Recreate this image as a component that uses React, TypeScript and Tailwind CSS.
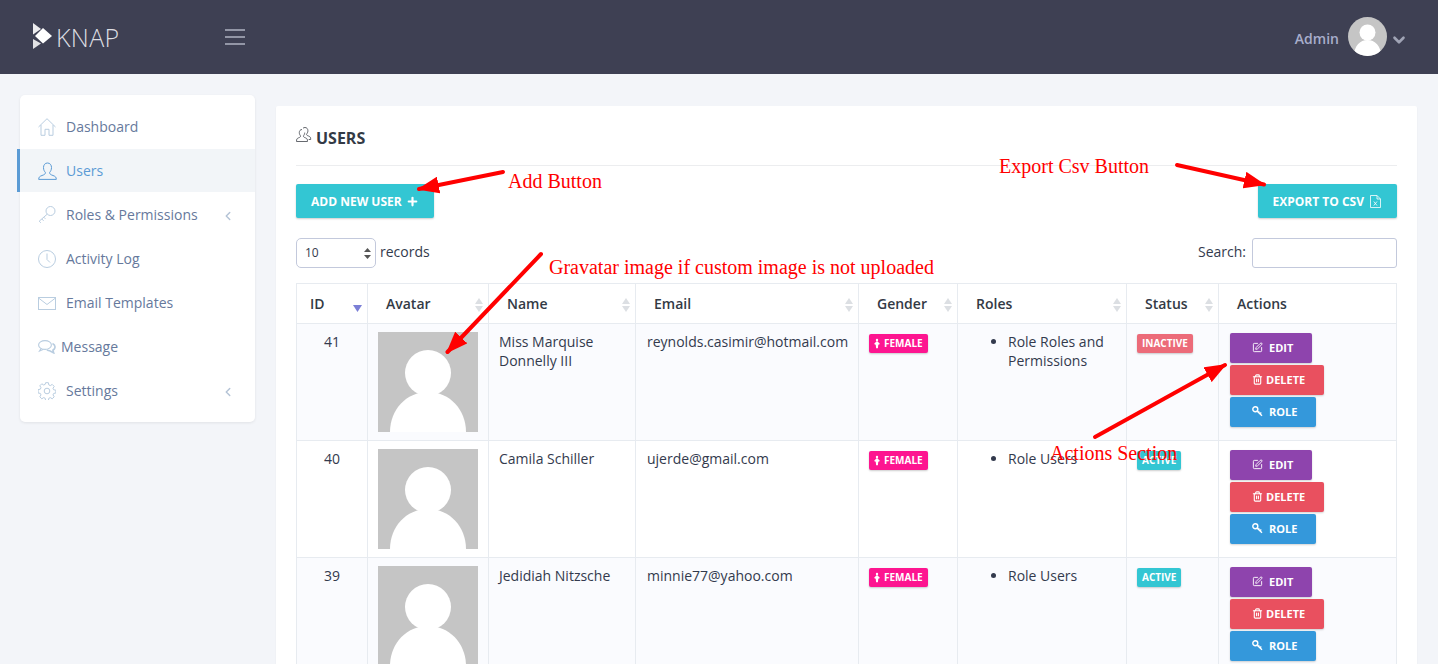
import React from "react";
import { Plus, Trash2, SquarePen, ChevronLeft, ChevronDown } from "lucide-react";

const users = [
  {
    id: 41,
    name: "Miss Marquise Donnelly III",
    email: "reynolds.casimir@hotmail.com",
    role: "Role Roles and Permissions",
    status: "INACTIVE",
  },
  { id: 40, name: "Camila Schiller", email: "ujerde@gmail.com", role: "Role Users", status: "ACTIVE" },
  { id: 39, name: "Jedidiah Nitzsche", email: "minnie77@yahoo.com", role: "Role Users", status: "ACTIVE" },
];

function Logo() {
  return (
    <div className="flex items-center">
      <svg width="22" height="30" viewBox="0 0 22 30">
        <polygon points="1,1 9,7 1,12.5" fill="#fff" opacity="0.9" />
        <polygon points="3,14 11,6 20,14 11,21.5" fill="#fff" />
        <polygon points="1,17 9,21.5 1,27" fill="#fff" opacity="0.85" />
      </svg>
      <span className="ml-[2px] text-[25px] leading-none font-light tracking-[0.3px] text-[#dcdde1]">KNAP</span>
    </div>
  );
}

function HomeIcon() {
  return (
    <svg width="18" height="18" viewBox="0 0 18 18" fill="none" stroke="#b9cde0" strokeWidth="1">
      <path d="M0.5 9 9 0.7 17.5 9M3 7v10.3h4v-6h4v6h4V7" />
    </svg>
  );
}

function UserIcon({ color }: { color: string }) {
  return (
    <svg width="19" height="18" viewBox="0 0 19 18" fill="none" stroke={color} strokeWidth="1">
      <path d="M9.5 1C7 1 5.5 3 5.5 5.5 5.5 8 6.6 9.6 7.4 10.5 7.4 12 6.6 12.6 4 13.5 1.8 14.3 .7 15 .7 17.4H18.3C18.3 15 17.2 14.3 15 13.5 12.4 12.6 11.6 12 11.6 10.5 12.4 9.6 13.5 8 13.5 5.5 13.5 3 12 1 9.5 1Z" />
    </svg>
  );
}

function KeyIcon() {
  return (
    <svg width="18" height="18" viewBox="0 0 18 18" fill="none" stroke="#b9cde0" strokeWidth="1">
      <circle cx="12.5" cy="5" r="4.5" />
      <path d="M9.2 8.2 1.2 15.2l1.6 1.6M3.8 13l1.8 1.8M5.8 11.2l1.6 1.6" />
    </svg>
  );
}

function ClockIcon() {
  return (
    <svg width="18" height="18" viewBox="0 0 18 18" fill="none" stroke="#b9cde0" strokeWidth="1">
      <circle cx="9" cy="9" r="8.5" />
      <path d="M9 3.5V9.5L12 12.5" />
    </svg>
  );
}

function MailIcon() {
  return (
    <svg width="18" height="13" viewBox="0 0 18 13" fill="none" stroke="#b9cde0" strokeWidth="1">
      <rect x="0.5" y="0.5" width="17" height="12" />
      <path d="M0.5 1 9 7.5 17.5 1" />
    </svg>
  );
}

function ChatIcon() {
  return (
    <svg width="18" height="14" viewBox="0 0 18 14" fill="none" stroke="#b9cde0" strokeWidth="1.1">
      <ellipse cx="7" cy="5" rx="6.4" ry="4.4" />
      <path d="M3 8.5 1.5 11 5.5 9.2" />
      <path d="M14.5 3.5c2 1 2.8 2.6 2.4 4.2-.3 1.2-1.2 2-2 2.5l.8 2.7-4-2.2c-1 0-2-.3-2.8-.8" strokeWidth="1.6" />
    </svg>
  );
}

function GearIcon() {
  return (
    <svg width="18" height="18" viewBox="0 0 18 18" fill="none" stroke="#b9cde0" strokeWidth="1">
      <circle cx="9" cy="9" r="2.8" />
      <path d="M7.6 .7h2.8l.4 2.2 1.5.7 1.9-1.2 2 2-1.2 1.9.7 1.5 2.2.4v2.8l-2.2.4-.7 1.5 1.2 1.9-2 2-1.9-1.2-1.5.7-.4 2.2H7.6l-.4-2.2-1.5-.7-1.9 1.2-2-2 1.2-1.9-.7-1.5-2.2-.4V7.6l2.2-.4.7-1.5-1.2-1.9 2-2 1.9 1.2 1.5-.7Z" />
    </svg>
  );
}

function GroupIcon() {
  return (
    <svg width="16" height="16" viewBox="0 0 16 16" fill="none" stroke="#55585f" strokeWidth="0.9">
      <path d="M6 2.5C4.3 2.5 3.3 3.9 3.3 5.6c0 1.6.8 2.7 1.3 3.3 0 1-.5 1.4-2.2 2C1 11.4.5 12.2.5 14.5h11c0-2.3-.5-3.1-1.9-3.6-1.7-.6-2.2-1-2.2-2 .5-.6 1.3-1.7 1.3-3.3" />
      <path d="M7 1.2C7.6.7 8.3.5 9 .5c1.8 0 2.9 1.4 2.9 3.2 0 1.7-.8 2.8-1.4 3.4 0 1 .5 1.4 2.2 2 1.5.5 2 1.3 2 3.4h-2" />
    </svg>
  );
}

function FileIcon() {
  return (
    <svg width="11" height="13" viewBox="0 0 11 13" fill="none" stroke="#fff" strokeWidth="0.8">
      <path d="M.5.5h6.5l3.5 3.5v8.5H.5ZM7 .5V4h3.5" />
      <path d="M3.8 6.5 7 10.5M7 6.5 3.8 10.5" />
    </svg>
  );
}

function FemaleIcon() {
  return (
    <svg width="6" height="11" viewBox="0 0 7 11" fill="#fff">
      <circle cx="3.5" cy="1.4" r="1.4" />
      <path d="M3 3h1L7 6 5 7 4.5 11h-2L2 7 0 6Z" />
    </svg>
  );
}

function SmallKeyIcon() {
  return (
    <svg width="11" height="11" viewBox="0 0 11 11" fill="none" stroke="#fff" strokeWidth="1.4">
      <circle cx="3.3" cy="3.3" r="2.5" />
      <path d="M5.2 5.2 10 9.8M8 7.8 9.3 6.6M6.4 6.4l1-1" />
    </svg>
  );
}

function SortIcon({ active }: { active?: boolean }) {
  if (active) {
    return (
      <svg width="9" height="7" viewBox="0 0 9 7" className="absolute right-[5px] top-[21px]">
        <polygon points="0,0 9,0 4.5,7" fill="#7b7fd6" />
      </svg>
    );
  }
  return (
    <svg width="8" height="14" viewBox="0 0 8 14" className="absolute right-[5px] top-[14px]">
      <polygon points="4,0 8,6 0,6" fill="#dcdfe3" />
      <polygon points="0,8 8,8 4,14" fill="#dcdfe3" />
    </svg>
  );
}

function Gravatar() {
  return (
    <svg width="100" height="100" viewBox="0 0 100 100" className="block bg-[#c5c5c5]">
      <circle cx="50" cy="41" r="23" fill="#fff" />
      <path d="M12 100C12 78 28 60 50 60 72 60 88 78 88 100Z" fill="#fff" />
    </svg>
  );
}

function NavItem(props: { icon: React.ReactNode; label: string; active?: boolean; arrow?: boolean; tight?: boolean }) {
  return (
    <li
      className={
        props.active
          ? "-ml-[3px] mb-px flex h-[43px] items-center border-l-[3px] border-[#5b9bd5] bg-[#f2f5f8] pl-[18px] pr-5 text-[#5b9bd5]"
          : "flex h-11 items-center pl-[18px] pr-5 text-[#66799c]"
      }
    >
      <span className={props.tight ? "flex w-[23px] justify-start" : "flex w-7 justify-start"}>{props.icon}</span>
      <span className="flex-1">{props.label}</span>
      {props.arrow && <ChevronLeft size={14} strokeWidth={2.5} className="mt-[2px] text-[#b4c3d6]" />}
    </li>
  );
}

function Sidebar() {
  return (
    <aside className="mt-[21px] ml-5 h-[327px] w-[235px] shrink-0 rounded-[5px] bg-white pt-[10px] shadow-[0_1px_3px_rgba(0,0,0,0.08)]">
      <ul className="text-[14px]">
        <NavItem icon={<HomeIcon />} label="Dashboard" />
        <NavItem icon={<UserIcon color="#5b9bd5" />} label="Users" active />
        <NavItem icon={<KeyIcon />} label="Roles & Permissions" arrow />
        <NavItem icon={<ClockIcon />} label="Activity Log" />
        <NavItem icon={<MailIcon />} label="Email Templates" />
        <NavItem icon={<ChatIcon />} label="Message" tight />
        <NavItem icon={<GearIcon />} label="Settings" arrow />
      </ul>
    </aside>
  );
}

function ActionButton(props: { color: string; icon: React.ReactNode; label: string }) {
  return (
    <button
      className={`flex h-[30px] items-center justify-center gap-[6px] rounded-[2px] pb-px pl-[22px] pr-[19px] text-[11px] font-bold text-white shadow-[0_1px_2px_rgba(0,0,0,0.18)] ${props.color}`}
    >
      {props.icon}
      {props.label}
    </button>
  );
}

function HeaderCell(props: { label: string; active?: boolean; narrow?: boolean }) {
  return (
    <th
      className={`relative h-10 border border-[#e7ebf0] pt-px text-left text-[14px] font-semibold text-[#333a45] ${
        props.narrow ? "pl-[13px]" : "pl-[18px]"
      }`}
    >
      {props.label}
      {props.label !== "Actions" && <SortIcon active={props.active} />}
    </th>
  );
}

function UserRow({ user, shaded }: { user: (typeof users)[number]; shaded: boolean }) {
  const td = "border border-[#e7ebf0] py-2 align-top leading-[19px]";
  return (
    <tr className={shaded ? "bg-[#fafbfe]" : "bg-white"}>
      <td className={`${td} px-[10px] text-center`}>{user.id}</td>
      <td className={`${td} px-[10px]`}>
        <Gravatar />
      </td>
      <td className={`${td} px-[10px]`}>{user.name}</td>
      <td className={`${td} px-[11px]`}>{user.email}</td>
      <td className={`${td} px-[10px]`}>
        <span className="mt-[2px] inline-flex h-[19px] items-center gap-[4px] rounded-[2px] bg-[#fd1590] px-[5px] text-[10px] font-bold text-white shadow-[0_1px_2px_rgba(0,0,0,0.2)]">
          <FemaleIcon />
          FEMALE
        </span>
      </td>
      <td className={`${td} px-[10px]`}>
        <ul className="list-disc pl-10">
          <li>{user.role}</li>
        </ul>
      </td>
      <td className={`${td} px-[10px]`}>
        <span
          className={`mt-[2px] inline-flex h-[19px] items-center rounded-[2px] px-[5px] text-[10px] font-bold text-white shadow-[0_1px_2px_rgba(0,0,0,0.2)] ${
            user.status === "ACTIVE" ? "bg-[#33c6d3]" : "bg-[#ec6b79]"
          }`}
        >
          {user.status}
        </span>
      </td>
      <td className={`${td} px-[11px]`}>
        <div className="mt-px flex flex-col items-start gap-[2px]">
          <ActionButton color="bg-[#8e44ad]" icon={<SquarePen size={11} />} label="EDIT" />
          <ActionButton color="bg-[#e9505f]" icon={<Trash2 size={11} strokeWidth={2.4} className="-mr-[3px]" />} label="DELETE" />
          <ActionButton color="bg-[#3498db]" icon={<SmallKeyIcon />} label="ROLE" />
        </div>
      </td>
    </tr>
  );
}

function Annotations() {
  const arrow = (x1: number, y1: number, x2: number, y2: number) => (
    <line x1={x1} y1={y1} x2={x2} y2={y2} stroke="#ff0000" strokeWidth="4" strokeLinecap="round" markerEnd="url(#head)" />
  );
  const note = "absolute font-['Liberation_Serif',serif] text-[20px] leading-none text-[#ff0000] whitespace-nowrap";
  return (
    <>
      <svg width="1438" height="664" className="pointer-events-none absolute inset-0">
        <defs>
          <marker id="head" markerUnits="userSpaceOnUse" markerWidth="22" markerHeight="17" refX="20" refY="8.5" orient="auto">
            <polygon points="0,0 22,8.5 0,17" fill="#ff0000" />
          </marker>
        </defs>
        {arrow(503, 172, 419, 189)}
        {arrow(1177, 165, 1264, 184.5)}
        {arrow(541, 254, 447.5, 352)}
        {arrow(1095, 437, 1225, 365)}
      </svg>
      <span className={`${note} left-[508px] top-[171px]`}>Add Button</span>
      <span className={`${note} left-[999px] top-[156px]`}>Export Csv Button</span>
      <span className={`${note} left-[549px] top-[257px]`}>Gravatar image if custom image is not uploaded</span>
      <span className={`${note} left-[1050px] top-[443px]`}>Actions Section</span>
    </>
  );
}

export default function App() {
  return (
    <div className="relative h-[664px] w-[1438px] overflow-hidden bg-[#f3f5f9] font-['Open_Sans',sans-serif] text-[14px] leading-[20px] text-[#333a4d]">
      <header className="flex h-[74px] items-center bg-[#3e4053] pl-8 pr-[30px]">
        <Logo />
        <div className="ml-[106px] flex w-5 flex-col gap-[5px]">
          <span className="h-[2px] bg-[#9396a6]" />
          <span className="h-[2px] bg-[#9396a6]" />
          <span className="h-[2px] bg-[#9396a6]" />
        </div>
        <div className="ml-auto flex items-center">
          <span className="mt-[3px] font-semibold text-[#a8aecb]">Admin</span>
          <span className="ml-[9px] -mt-px h-[39px] w-[39px] overflow-hidden rounded-full">
            <svg width="39" height="39" viewBox="0 0 39 39" className="bg-[#c5c5c5]">
              <circle cx="19.5" cy="15.5" r="8" fill="#fff" />
              <path d="M6 39C6 29 12 23 19.5 23 27 23 33 29 33 39Z" fill="#fff" />
            </svg>
          </span>
          <ChevronDown size={18} strokeWidth={3.5} className="ml-[3px] mt-[5px] text-[#a0a4b5]" />
        </div>
      </header>

      <div className="flex">
        <Sidebar />

        <main className="mt-8 ml-[21px] h-[600px] w-[1141px] rounded-[2px] bg-white px-5 pt-5 shadow-[0_1px_2px_rgba(0,0,0,0.06)]">
          <div className="flex h-10 items-start gap-1 border-b border-[#ecedef]">
            <span className="mt-[1px]">
              <GroupIcon />
            </span>
            <h2 className="text-[16px] leading-[24px] font-bold text-[#333a45]">USERS</h2>
          </div>

          <div className="mt-[18px] flex justify-between">
            <button className="flex h-[34px] items-center gap-[4px] rounded-[2px] bg-[#33c6d3] pl-[15px] pr-[15px] pt-px text-[12px] font-bold text-white shadow-[0_1px_2px_rgba(0,0,0,0.2)]">
              ADD NEW USER
              <Plus size={13} strokeWidth={4} />
            </button>
            <button className="flex h-[34px] items-center gap-[6px] rounded-[2px] bg-[#33c6d3] pl-[15px] pr-[16px] pt-px text-[12px] font-bold text-white shadow-[0_1px_2px_rgba(0,0,0,0.2)]">
              EXPORT TO CSV
              <FileIcon />
            </button>
          </div>

          <div className="mt-5 flex items-center justify-between">
            <div className="flex items-center gap-1">
              <div className="flex h-[30px] w-20 items-center justify-between rounded-[5px] border border-[#c3c9dc] pl-2 pr-[4px] text-[12px]">
                10
                <svg width="7" height="11" viewBox="0 0 7 11" fill="#555">
                  <polygon points="3.5,0 7,4 0,4" />
                  <polygon points="0,7 7,7 3.5,11" />
                </svg>
              </div>
              <span className="-mt-[2px]">records</span>
            </div>
            <div className="flex items-center gap-[6px]">
              <span className="-mt-[2px]">Search:</span>
              <div className="h-[30px] w-[145px] rounded-[3px] border border-[#c3c9dc]" />
            </div>
          </div>

          <table className="mt-[15px] w-[1100px] table-fixed border-collapse">
            <colgroup>
              <col className="w-[71px]" />
              <col className="w-[121px]" />
              <col className="w-[147px]" />
              <col className="w-[223px]" />
              <col className="w-[99px]" />
              <col className="w-[169px]" />
              <col className="w-[92px]" />
              <col className="w-[178px]" />
            </colgroup>
            <thead>
              <tr>
                <HeaderCell label="ID" active narrow />
                <HeaderCell label="Avatar" />
                <HeaderCell label="Name" />
                <HeaderCell label="Email" />
                <HeaderCell label="Gender" />
                <HeaderCell label="Roles" />
                <HeaderCell label="Status" />
                <HeaderCell label="Actions" />
              </tr>
            </thead>
            <tbody>
              {users.map((user, i) => (
                <UserRow key={user.id} user={user} shaded={i !== 1} />
              ))}
            </tbody>
          </table>
        </main>
      </div>

      <Annotations />
    </div>
  );
}
